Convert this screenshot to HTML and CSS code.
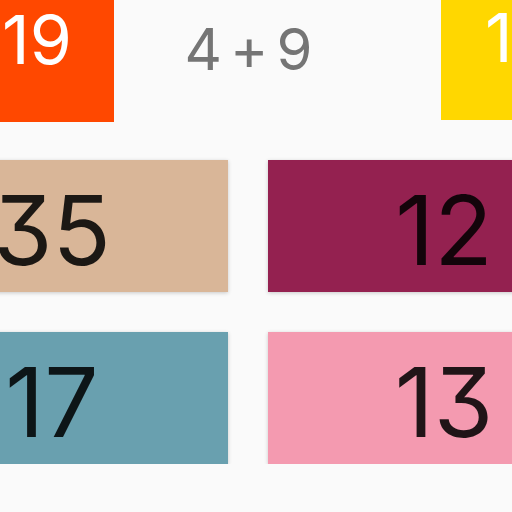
FILE: index.html
```
<!DOCTYPE html>
<html lang="en">
<head>
<meta charset="utf-8">
<title>Math quiz</title>
<link rel="stylesheet" href="styles.css">
</head>
<body>
<main class="board">
<header class="status">
<div class="tile timer">19</div>
<h1 class="question"><span>4</span> <span>+</span> <span>9</span></h1>
<div class="tile score">1</div>
</header>
<div class="answers">
<button class="answer tan" type="button">35</button>
<button class="answer plum" type="button">12</button>
<button class="answer teal" type="button">17</button>
<button class="answer pink" type="button">13</button>
</div>
</main>
</body>
</html>
```

FILE: styles.css
```
* {
  box-sizing: border-box;
}

body {
  margin: 0;
  overflow: hidden;
  background: #fafafa;
  font-family: Inter, "Noto Sans", sans-serif;
  font-weight: 400;
  font-feature-settings: "cv09";
}

.board {
  margin: 0 -108px 0 -124px;
}

.status {
  display: flex;
  align-items: flex-start;
  padding: 0 25px 0 84px;
  margin-bottom: 38px;
}

.tile {
  width: 154px;
  height: 122px;
  color: #fff;
  font-size: 68px;
  line-height: 78px;
  text-align: center;
}

.timer {
  background: #ff4800;
}

.score {
  height: 120px;
  padding-left: 44px;
  background: #ffd700;
  line-height: 74px;
  text-align: left;
}

.question {
  display: flex;
  flex: 1;
  justify-content: center;
  gap: 8px;
  margin: 0;
  padding-right: 58px;
  color: #757575;
  font-size: 58px;
  font-weight: 400;
  line-height: 98px;
}

.answers {
  display: grid;
  grid-template-columns: 1fr 1fr;
  gap: 40px;
}

.answer {
  height: 132px;
  border: 0;
  padding: 8px 0 0;
  color: rgba(0, 0, 0, 0.87);
  font: inherit;
  font-size: 96px;
  line-height: 124px;
  font-feature-settings: inherit;
  box-shadow: 0 1px 4px rgba(0, 0, 0, 0.2);
}

.tan {
  background: #d9b698;
}

.plum {
  background: #942150;
}

.teal {
  background: #69a0af;
}

.pink {
  background: #f49ab0;
}
```
